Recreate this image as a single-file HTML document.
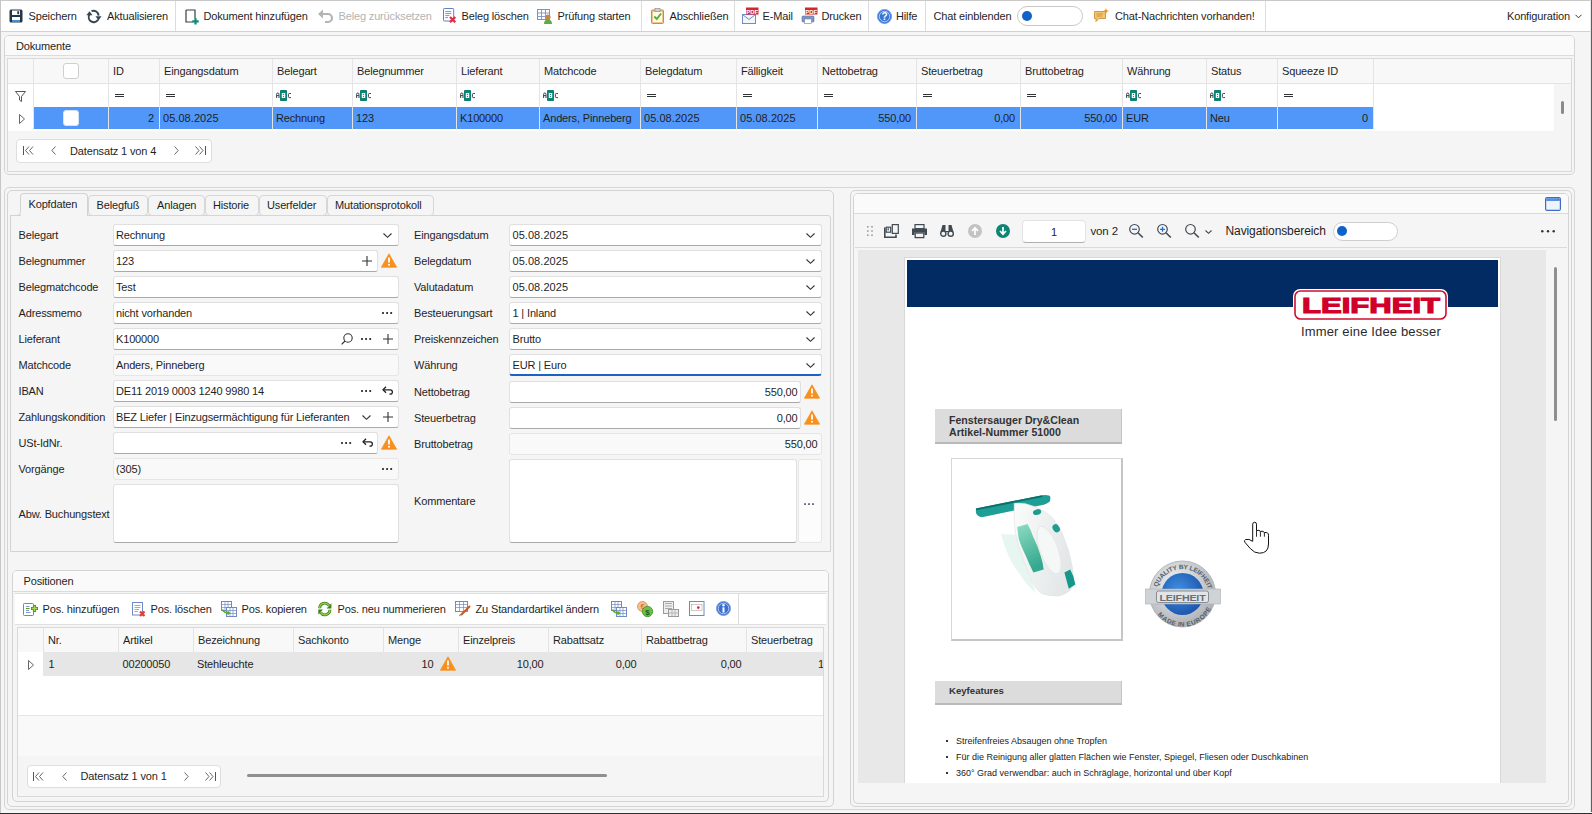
<!DOCTYPE html><html><head><meta charset="utf-8"><style>*{box-sizing:border-box;margin:0;padding:0}
html,body{width:1592px;height:814px;overflow:hidden}
body{position:relative;background:#f5f5f5;font-family:"Liberation Sans",sans-serif;font-size:11px;letter-spacing:-0.15px;color:#1f1f1f}
.a{position:absolute}
.t{position:absolute;white-space:nowrap}
svg{position:absolute;overflow:visible}
.dis{color:#b3b3b3}
</style></head><body>
<div class="a" style="left:0px;top:0px;width:1592px;height:32px;background:#fff;border-top:1px solid #c9c9c9;border-left:1px solid #c9c9c9;border-right:2px solid #d0d0d0"></div>
<div class="a" style="left:0px;top:31px;width:1592px;height:1px;background:#d2d2d2"></div>
<div class="a" style="left:175px;top:1px;width:1px;height:30px;background:#dcdcdc"></div>
<div class="a" style="left:641px;top:1px;width:1px;height:30px;background:#dcdcdc"></div>
<div class="a" style="left:734px;top:1px;width:1px;height:30px;background:#dcdcdc"></div>
<div class="a" style="left:868px;top:1px;width:1px;height:30px;background:#dcdcdc"></div>
<div class="a" style="left:925px;top:1px;width:1px;height:30px;background:#dcdcdc"></div>
<div class="a" style="left:1265px;top:1px;width:1px;height:30px;background:#dcdcdc"></div>
<svg style="left:9px;top:9px;" width="14" height="14" viewBox="0 0 14 14"><rect x="0.5" y="0.5" width="13" height="13" rx="1.5" fill="#263744"/><rect x="3" y="1.5" width="8" height="4.5" fill="#fff"/><rect x="8.3" y="2.2" width="1.8" height="3" fill="#263744"/><rect x="3" y="8" width="8" height="5" fill="#fff"/><rect x="3" y="11" width="8" height="2" fill="#3b8ede"/></svg>
<div class="t " style="left:28.5px;top:9.0px;height:14px;line-height:14px;">Speichern</div>
<svg style="left:86px;top:10px;" width="16" height="12" viewBox="0 0 16 12"><path d="M3.5 4.5 A5 5 0 0 0 12 9.8" stroke="#37474f" stroke-width="2" fill="none"/><path d="M5.5 1.2 A5 5 0 0 1 12.6 5.6" stroke="#37474f" stroke-width="2" fill="none"/><path d="M0.3 5.2 L3.5 1.2 L6.6 5.2Z" fill="#37474f"/><path d="M10 6.8 L16 6.8 L13 11 Z" fill="#37474f" transform="translate(-0.5,-0.5)"/></svg>
<div class="t " style="left:107px;top:9.0px;height:14px;line-height:14px;">Aktualisieren</div>
<svg style="left:185px;top:9px;" width="14" height="16" viewBox="0 0 14 16"><path d="M1 1 H10 V9 M1 1 V13 H8" stroke="#3a3f44" stroke-width="1.2" fill="none"/><path d="M10.5 9 V15.5 M7.3 12.3 H13.7" stroke="#0e8a76" stroke-width="2.2"/></svg>
<div class="t " style="left:203.5px;top:9.0px;height:14px;line-height:14px;">Dokument hinzufügen</div>
<svg style="left:318px;top:9px;" width="16" height="14" viewBox="0 0 16 14"><path d="M2.5 5 H10 A4 4 0 0 1 10 13 H7" stroke="#b4b4b4" stroke-width="2.2" fill="none"/><path d="M0 5 L5 0.5 L5 9.5Z" fill="#b4b4b4"/></svg>
<div class="t dis" style="left:338.5px;top:9.0px;height:14px;line-height:14px;">Beleg zurücksetzen</div>
<svg style="left:443px;top:8px;" width="14" height="15" viewBox="0 0 14 15"><rect x="0.5" y="0.5" width="10.2" height="12.5" rx="0.8" fill="#fff" stroke="#5f7fc8" stroke-width="1"/><path d="M2.3 3.6H8.3M2.3 5.6H8.3M2.3 7.6H6.5M2.3 9.6H5" stroke="#6b89cf" stroke-width="0.9"/><path d="M7 9 L12.3 14.3 M12.3 9 L7 14.3" stroke="#dd3048" stroke-width="2.3"/></svg>
<div class="t " style="left:461.5px;top:9.0px;height:14px;line-height:14px;">Beleg löschen</div>
<svg style="left:537px;top:9px;" width="16" height="15" viewBox="0 0 16 15"><rect x="0.5" y="0.5" width="12" height="10" fill="#fff" stroke="#7892cf"/><path d="M0.5 4H12.5M0.5 7.5H12.5M4.5 0.5V10.5M8.5 0.5V10.5" stroke="#7892cf" stroke-width="0.9"/><circle cx="11" cy="8" r="2.6" fill="#c8844a"/><path d="M7 15 Q7 10.5 11 10.5 Q15 10.5 15 15Z" fill="#5fae3d"/></svg>
<div class="t " style="left:557.5px;top:9.0px;height:14px;line-height:14px;">Prüfung starten</div>
<svg style="left:651px;top:8px;" width="13" height="16" viewBox="0 0 13 16"><rect x="0.5" y="2" width="12" height="13.5" rx="1" fill="#f2c48a" stroke="#cf8a3a"/><rect x="2" y="4" width="9" height="10" fill="#fffbe8"/><rect x="4" y="0.5" width="5" height="3" fill="#d0d0d0" stroke="#888" stroke-width="0.6"/><path d="M3.2 8.5 L5.8 11 L10 5.5" stroke="#55b43c" stroke-width="2" fill="none"/></svg>
<div class="t " style="left:669.5px;top:9.0px;height:14px;line-height:14px;">Abschließen</div>
<svg style="left:742px;top:7px;" width="17" height="17" viewBox="0 0 17 17"><rect x="0.5" y="7.5" width="13" height="9" fill="#f3f6fb" stroke="#6e8ec4"/><path d="M0.5 7.5 L7 12.5 L13.5 7.5" stroke="#6e8ec4" fill="none"/><rect x="4" y="0.5" width="12.5" height="7" fill="#d8242c"/><text x="10.2" y="6.5" font-size="6" font-family="Liberation Sans" font-weight="bold" fill="#fff" text-anchor="middle" letter-spacing="0">PDF</text></svg>
<div class="t " style="left:762.5px;top:9.0px;height:14px;line-height:14px;">E-Mail</div>
<svg style="left:801px;top:7px;" width="17" height="17" viewBox="0 0 17 17"><rect x="1" y="9" width="12" height="6" rx="1" fill="#7f96c4" stroke="#5a6f9c" stroke-width="0.6"/><rect x="3.5" y="12" width="7" height="4.5" fill="#fff" stroke="#6a7fae" stroke-width="0.6"/><rect x="4" y="0.5" width="12.5" height="7" fill="#d8242c"/><text x="10.2" y="6.5" font-size="6" font-family="Liberation Sans" font-weight="bold" fill="#fff" text-anchor="middle" letter-spacing="0">PDF</text></svg>
<div class="t " style="left:821.5px;top:9.0px;height:14px;line-height:14px;">Drucken</div>
<svg style="left:877px;top:9px;" width="15" height="15" viewBox="0 0 15 15"><circle cx="7.5" cy="7.5" r="7" fill="#3a74d4" stroke="#6f9ee6" stroke-width="1"/><circle cx="7.5" cy="7.5" r="5.2" fill="none" stroke="#cfe0fb" stroke-width="0.8"/><text x="7.5" y="11.2" font-size="10" font-family="Liberation Sans" font-weight="bold" fill="#fff" text-anchor="middle" letter-spacing="0">?</text></svg>
<div class="t " style="left:896px;top:9.0px;height:14px;line-height:14px;">Hilfe</div>
<div class="t " style="left:933.5px;top:9.0px;height:14px;line-height:14px;">Chat einblenden</div>
<div class="a" style="left:1017px;top:6px;width:66px;height:20px;background:#fff;border:1px solid #c9c9c9;border-radius:10px"></div>
<div class="a" style="left:1022px;top:11px;width:10px;height:10px;background:#0f62c9;border-radius:50%"></div>
<svg style="left:1094px;top:8px;" width="15" height="15" viewBox="0 0 15 15"><path d="M0.5 3.5 H11.5 V10.5 H5 L2 13.5 V10.5 H0.5Z" fill="#f4c46c" stroke="#c78a2e" stroke-width="0.8"/><path d="M2.5 6H9M2.5 8H8" stroke="#b9832d" stroke-width="0.7"/><path d="M12 0 L12.8 2.2 L15 3 L12.8 3.8 L12 6 L11.2 3.8 L9 3 L11.2 2.2Z" fill="#f08a1c"/></svg>
<div class="t " style="left:1115px;top:9.0px;height:14px;line-height:14px;">Chat-Nachrichten vorhanden!</div>
<div class="t " style="left:1507px;top:9.0px;height:14px;line-height:14px;">Konfiguration</div>
<svg style="left:1575px;top:14px;" width="7" height="5" viewBox="0 0 7 5"><path d="M0.5 0.8 L3.5 3.8 L6.5 0.8" stroke="#333" stroke-width="1" fill="none"/></svg>
<div class="a" style="left:4px;top:35px;width:1571px;height:140px;border:1px solid #d4d4d4;border-radius:5px;background:#f5f5f5"></div>
<div class="a" style="left:5px;top:36px;width:1569px;height:19px;background:#fafafa;border-radius:4px 4px 0 0"></div>
<div class="a" style="left:5px;top:55px;width:1569px;height:1px;background:#dcdcdc"></div>
<div class="t " style="left:16px;top:39.0px;height:14px;line-height:14px;">Dokumente</div>
<div class="a" style="left:7px;top:58px;width:1565px;height:114px;border:1px solid #d9d9d9;background:#f5f5f5"></div>
<div class="a" style="left:8px;top:59px;width:1563px;height:24px;background:#f8f8f8"></div>
<div class="a" style="left:8px;top:83px;width:1563px;height:1px;background:#e3e3e3"></div>
<div class="a" style="left:8px;top:84px;width:1546px;height:47px;background:#fff"></div>
<div class="a" style="left:33px;top:107px;width:1340px;height:22px;background:#5097f9"></div>
<div class="a" style="left:33px;top:59px;width:1px;height:71px;background:#e4e4e4"></div>
<div class="a" style="left:108px;top:59px;width:1px;height:71px;background:#e4e4e4"></div>
<div class="a" style="left:159px;top:59px;width:1px;height:71px;background:#e4e4e4"></div>
<div class="a" style="left:272px;top:59px;width:1px;height:71px;background:#e4e4e4"></div>
<div class="a" style="left:352px;top:59px;width:1px;height:71px;background:#e4e4e4"></div>
<div class="a" style="left:456px;top:59px;width:1px;height:71px;background:#e4e4e4"></div>
<div class="a" style="left:539px;top:59px;width:1px;height:71px;background:#e4e4e4"></div>
<div class="a" style="left:640px;top:59px;width:1px;height:71px;background:#e4e4e4"></div>
<div class="a" style="left:736px;top:59px;width:1px;height:71px;background:#e4e4e4"></div>
<div class="a" style="left:817px;top:59px;width:1px;height:71px;background:#e4e4e4"></div>
<div class="a" style="left:916px;top:59px;width:1px;height:71px;background:#e4e4e4"></div>
<div class="a" style="left:1020px;top:59px;width:1px;height:71px;background:#e4e4e4"></div>
<div class="a" style="left:1122px;top:59px;width:1px;height:71px;background:#e4e4e4"></div>
<div class="a" style="left:1206px;top:59px;width:1px;height:71px;background:#e4e4e4"></div>
<div class="a" style="left:1277px;top:59px;width:1px;height:71px;background:#e4e4e4"></div>
<div class="a" style="left:1373px;top:59px;width:1px;height:71px;background:#e4e4e4"></div>
<div class="t " style="left:113px;top:63.5px;height:14px;line-height:14px;">ID</div>
<svg style="left:115px;top:94px;" width="9" height="4" viewBox="0 0 9 4"><path d="M0 0.5H9M0 2.5H9" stroke="#333" stroke-width="1" shape-rendering="crispEdges"/></svg>
<div class="t " style="right:1438px;top:111.0px;height:14px;line-height:14px;text-align:right;">2</div>
<div class="t " style="left:164px;top:63.5px;height:14px;line-height:14px;">Eingangsdatum</div>
<svg style="left:166px;top:94px;" width="9" height="4" viewBox="0 0 9 4"><path d="M0 0.5H9M0 2.5H9" stroke="#333" stroke-width="1" shape-rendering="crispEdges"/></svg>
<div class="t " style="left:163px;top:111.0px;height:14px;line-height:14px;letter-spacing:0.05px;">05.08.2025</div>
<div class="t " style="left:277px;top:63.5px;height:14px;line-height:14px;">Belegart</div>
<svg style="left:276px;top:90px;" width="16" height="11" viewBox="0 0 16 11"><rect x="4" y="0" width="7" height="11" rx="0.8" fill="#0d8273"/><rect x="5.8" y="3" width="3.4" height="5" fill="#fff"/><circle cx="7.5" cy="4.4" r="0.7" fill="#0d8273"/><circle cx="7.5" cy="6.6" r="0.7" fill="#0d8273"/><path d="M0.6 8 V4.3 Q0.6 3 1.8 3 Q3 3 3 4.3 V8 M0.6 5.6H3" stroke="#3a4048" stroke-width="1" fill="none"/><path d="M15 3.5 H13.3 Q12.4 3.5 12.4 4.4 V6.6 Q12.4 7.6 13.3 7.6 H15" stroke="#3a4048" stroke-width="1" fill="none"/></svg>
<div class="t " style="left:276px;top:111.0px;height:14px;line-height:14px;">Rechnung</div>
<div class="t " style="left:357px;top:63.5px;height:14px;line-height:14px;">Belegnummer</div>
<svg style="left:356px;top:90px;" width="16" height="11" viewBox="0 0 16 11"><rect x="4" y="0" width="7" height="11" rx="0.8" fill="#0d8273"/><rect x="5.8" y="3" width="3.4" height="5" fill="#fff"/><circle cx="7.5" cy="4.4" r="0.7" fill="#0d8273"/><circle cx="7.5" cy="6.6" r="0.7" fill="#0d8273"/><path d="M0.6 8 V4.3 Q0.6 3 1.8 3 Q3 3 3 4.3 V8 M0.6 5.6H3" stroke="#3a4048" stroke-width="1" fill="none"/><path d="M15 3.5 H13.3 Q12.4 3.5 12.4 4.4 V6.6 Q12.4 7.6 13.3 7.6 H15" stroke="#3a4048" stroke-width="1" fill="none"/></svg>
<div class="t " style="left:356px;top:111.0px;height:14px;line-height:14px;">123</div>
<div class="t " style="left:461px;top:63.5px;height:14px;line-height:14px;">Lieferant</div>
<svg style="left:460px;top:90px;" width="16" height="11" viewBox="0 0 16 11"><rect x="4" y="0" width="7" height="11" rx="0.8" fill="#0d8273"/><rect x="5.8" y="3" width="3.4" height="5" fill="#fff"/><circle cx="7.5" cy="4.4" r="0.7" fill="#0d8273"/><circle cx="7.5" cy="6.6" r="0.7" fill="#0d8273"/><path d="M0.6 8 V4.3 Q0.6 3 1.8 3 Q3 3 3 4.3 V8 M0.6 5.6H3" stroke="#3a4048" stroke-width="1" fill="none"/><path d="M15 3.5 H13.3 Q12.4 3.5 12.4 4.4 V6.6 Q12.4 7.6 13.3 7.6 H15" stroke="#3a4048" stroke-width="1" fill="none"/></svg>
<div class="t " style="left:460px;top:111.0px;height:14px;line-height:14px;">K100000</div>
<div class="t " style="left:544px;top:63.5px;height:14px;line-height:14px;">Matchcode</div>
<svg style="left:543px;top:90px;" width="16" height="11" viewBox="0 0 16 11"><rect x="4" y="0" width="7" height="11" rx="0.8" fill="#0d8273"/><rect x="5.8" y="3" width="3.4" height="5" fill="#fff"/><circle cx="7.5" cy="4.4" r="0.7" fill="#0d8273"/><circle cx="7.5" cy="6.6" r="0.7" fill="#0d8273"/><path d="M0.6 8 V4.3 Q0.6 3 1.8 3 Q3 3 3 4.3 V8 M0.6 5.6H3" stroke="#3a4048" stroke-width="1" fill="none"/><path d="M15 3.5 H13.3 Q12.4 3.5 12.4 4.4 V6.6 Q12.4 7.6 13.3 7.6 H15" stroke="#3a4048" stroke-width="1" fill="none"/></svg>
<div class="t " style="left:543px;top:111.0px;height:14px;line-height:14px;">Anders, Pinneberg</div>
<div class="t " style="left:645px;top:63.5px;height:14px;line-height:14px;">Belegdatum</div>
<svg style="left:647px;top:94px;" width="9" height="4" viewBox="0 0 9 4"><path d="M0 0.5H9M0 2.5H9" stroke="#333" stroke-width="1" shape-rendering="crispEdges"/></svg>
<div class="t " style="left:644px;top:111.0px;height:14px;line-height:14px;letter-spacing:0.05px;">05.08.2025</div>
<div class="t " style="left:741px;top:63.5px;height:14px;line-height:14px;">Fälligkeit</div>
<svg style="left:743px;top:94px;" width="9" height="4" viewBox="0 0 9 4"><path d="M0 0.5H9M0 2.5H9" stroke="#333" stroke-width="1" shape-rendering="crispEdges"/></svg>
<div class="t " style="left:740px;top:111.0px;height:14px;line-height:14px;letter-spacing:0.05px;">05.08.2025</div>
<div class="t " style="left:822px;top:63.5px;height:14px;line-height:14px;">Nettobetrag</div>
<svg style="left:824px;top:94px;" width="9" height="4" viewBox="0 0 9 4"><path d="M0 0.5H9M0 2.5H9" stroke="#333" stroke-width="1" shape-rendering="crispEdges"/></svg>
<div class="t " style="right:681px;top:111.0px;height:14px;line-height:14px;text-align:right;">550,00</div>
<div class="t " style="left:921px;top:63.5px;height:14px;line-height:14px;">Steuerbetrag</div>
<svg style="left:923px;top:94px;" width="9" height="4" viewBox="0 0 9 4"><path d="M0 0.5H9M0 2.5H9" stroke="#333" stroke-width="1" shape-rendering="crispEdges"/></svg>
<div class="t " style="right:577px;top:111.0px;height:14px;line-height:14px;text-align:right;">0,00</div>
<div class="t " style="left:1025px;top:63.5px;height:14px;line-height:14px;">Bruttobetrag</div>
<svg style="left:1027px;top:94px;" width="9" height="4" viewBox="0 0 9 4"><path d="M0 0.5H9M0 2.5H9" stroke="#333" stroke-width="1" shape-rendering="crispEdges"/></svg>
<div class="t " style="right:475px;top:111.0px;height:14px;line-height:14px;text-align:right;">550,00</div>
<div class="t " style="left:1127px;top:63.5px;height:14px;line-height:14px;">Währung</div>
<svg style="left:1126px;top:90px;" width="16" height="11" viewBox="0 0 16 11"><rect x="4" y="0" width="7" height="11" rx="0.8" fill="#0d8273"/><rect x="5.8" y="3" width="3.4" height="5" fill="#fff"/><circle cx="7.5" cy="4.4" r="0.7" fill="#0d8273"/><circle cx="7.5" cy="6.6" r="0.7" fill="#0d8273"/><path d="M0.6 8 V4.3 Q0.6 3 1.8 3 Q3 3 3 4.3 V8 M0.6 5.6H3" stroke="#3a4048" stroke-width="1" fill="none"/><path d="M15 3.5 H13.3 Q12.4 3.5 12.4 4.4 V6.6 Q12.4 7.6 13.3 7.6 H15" stroke="#3a4048" stroke-width="1" fill="none"/></svg>
<div class="t " style="left:1126px;top:111.0px;height:14px;line-height:14px;">EUR</div>
<div class="t " style="left:1211px;top:63.5px;height:14px;line-height:14px;">Status</div>
<svg style="left:1210px;top:90px;" width="16" height="11" viewBox="0 0 16 11"><rect x="4" y="0" width="7" height="11" rx="0.8" fill="#0d8273"/><rect x="5.8" y="3" width="3.4" height="5" fill="#fff"/><circle cx="7.5" cy="4.4" r="0.7" fill="#0d8273"/><circle cx="7.5" cy="6.6" r="0.7" fill="#0d8273"/><path d="M0.6 8 V4.3 Q0.6 3 1.8 3 Q3 3 3 4.3 V8 M0.6 5.6H3" stroke="#3a4048" stroke-width="1" fill="none"/><path d="M15 3.5 H13.3 Q12.4 3.5 12.4 4.4 V6.6 Q12.4 7.6 13.3 7.6 H15" stroke="#3a4048" stroke-width="1" fill="none"/></svg>
<div class="t " style="left:1210px;top:111.0px;height:14px;line-height:14px;">Neu</div>
<div class="t " style="left:1282px;top:63.5px;height:14px;line-height:14px;">Squeeze ID</div>
<svg style="left:1284px;top:94px;" width="9" height="4" viewBox="0 0 9 4"><path d="M0 0.5H9M0 2.5H9" stroke="#333" stroke-width="1" shape-rendering="crispEdges"/></svg>
<div class="t " style="right:224px;top:111.0px;height:14px;line-height:14px;text-align:right;">0</div>
<div class="a" style="left:63px;top:63px;width:16px;height:16px;background:#fff;border:1px solid #cfcfcf;border-radius:3px"></div>
<div class="a" style="left:63px;top:110px;width:16px;height:16px;background:#fff;border:1px solid #d6e4f7;border-radius:3px"></div>
<svg style="left:15px;top:91px;" width="11" height="10" viewBox="0 0 11 10"><path d="M0.5 0.5 H10.5 L6.5 5.5 V10.5 L4.5 9 V5.5Z" fill="none" stroke="#444" stroke-width="0.9"/></svg>
<svg style="left:18.5px;top:113.5px;" width="6" height="10" viewBox="0 0 6 10"><path d="M0.5 0.5 L5.5 5 L0.5 9.5Z" fill="none" stroke="#555" stroke-width="0.9"/></svg>
<div class="a" style="left:1561px;top:101px;width:3px;height:13px;background:#8a8a8a;border-radius:2px"></div>
<div class="a" style="left:16px;top:139px;width:196px;height:24px;background:#fff;border:1px solid #dedede;border-radius:4px"></div>
<svg style="left:23px;top:146px;" width="11" height="9" viewBox="0 0 11 9"><path d="M0.5 0 V9" stroke="#555"/><path d="M6 0.5 L2.5 4.5 L6 8.5 M10 0.5 L6.5 4.5 L10 8.5" stroke="#555" fill="none" stroke-width="0.9"/></svg>
<svg style="left:51px;top:146px;" width="5" height="9" viewBox="0 0 5 9"><path d="M4.5 0.5 L0.8 4.5 L4.5 8.5" stroke="#555" fill="none" stroke-width="0.9"/></svg>
<div class="t " style="left:70px;top:144.0px;height:14px;line-height:14px;">Datensatz 1 von 4</div>
<svg style="left:174px;top:146px;" width="5" height="9" viewBox="0 0 5 9"><path d="M0.5 0.5 L4.2 4.5 L0.5 8.5" stroke="#555" fill="none" stroke-width="0.9"/></svg>
<svg style="left:195px;top:146px;" width="11" height="9" viewBox="0 0 11 9"><path d="M10.5 0 V9" stroke="#555"/><path d="M0.5 0.5 L4 4.5 L0.5 8.5 M4.5 0.5 L8 4.5 L4.5 8.5" stroke="#555" fill="none" stroke-width="0.9"/></svg>
<div class="a" style="left:4px;top:187px;width:1571px;height:623px;border:1px solid #d6d6d6;border-radius:5px"></div>
<div class="a" style="left:7px;top:190px;width:827px;height:617px;border:1px solid #d3d3d3;border-radius:5px"></div>
<div class="a" style="left:10px;top:215px;width:821px;height:337px;border:1px solid #d3d3d3;border-radius:0 3px 0 0"></div>
<div class="a" style="left:20px;top:193px;width:67.5px;height:23px;border:1px solid #d3d3d3;border-bottom:none;border-radius:4px 4px 0 0;background:#f5f5f5"></div>
<div class="t " style="left:28.5px;top:197.0px;height:14px;line-height:14px;">Kopfdaten</div>
<div class="a" style="left:11px;top:210px;width:10.5px;height:5px;background:#f5f5f5"></div>
<svg style="left:10px;top:205px;" width="12" height="12" viewBox="0 0 12 12"><path d="M10.5 0 V7 Q10.5 10.5 7 10.5 H0" stroke="#d3d3d3" stroke-width="1" fill="none"/></svg>
<div class="a" style="left:87.5px;top:195px;width:60.5px;height:20.5px;border:1px solid #d6d6d6;border-radius:4px;background:#f5f5f5"></div>
<div class="t " style="left:96.5px;top:197.5px;height:14px;line-height:14px;">Belegfuß</div>
<div class="a" style="left:148px;top:195px;width:56.5px;height:20.5px;border:1px solid #d6d6d6;border-radius:4px;background:#f5f5f5"></div>
<div class="t " style="left:157px;top:197.5px;height:14px;line-height:14px;">Anlagen</div>
<div class="a" style="left:204.5px;top:195px;width:54.0px;height:20.5px;border:1px solid #d6d6d6;border-radius:4px;background:#f5f5f5"></div>
<div class="t " style="left:213px;top:197.5px;height:14px;line-height:14px;">Historie</div>
<div class="a" style="left:258.5px;top:195px;width:68.0px;height:20.5px;border:1px solid #d6d6d6;border-radius:4px;background:#f5f5f5"></div>
<div class="t " style="left:267px;top:197.5px;height:14px;line-height:14px;">Userfelder</div>
<div class="a" style="left:326.5px;top:195px;width:107.5px;height:20.5px;border:1px solid #d6d6d6;border-radius:4px;background:#f5f5f5"></div>
<div class="t " style="left:335px;top:197.5px;height:14px;line-height:14px;">Mutationsprotokoll</div>
<div class="t " style="left:18.5px;top:228.0px;height:14px;line-height:14px;">Belegart</div>
<div class="a" style="left:113px;top:224px;width:285.5px;height:22px;background:#fff;border:1px solid #e0e0e0;border-bottom:1px solid #a9a9a9;border-radius:3px"></div>
<div class="t " style="left:116px;top:228.0px;height:14px;line-height:14px;">Rechnung</div>
<svg style="left:382.5px;top:232.5px;" width="9" height="5" viewBox="0 0 9 5"><path d="M0.5 0.5 L4.5 4.3 L8.5 0.5" stroke="#333" stroke-width="1.1" fill="none"/></svg>
<div class="t " style="left:18.5px;top:254.0px;height:14px;line-height:14px;">Belegnummer</div>
<div class="a" style="left:113px;top:250px;width:265px;height:22px;background:#fff;border:1px solid #e0e0e0;border-bottom:1px solid #a9a9a9;border-radius:3px"></div>
<div class="t " style="left:116px;top:254.0px;height:14px;line-height:14px;">123</div>
<svg style="left:381px;top:253px;" width="16" height="15" viewBox="0 0 16 15"><path d="M8 0.8 L15.6 14.2 H0.4Z" fill="#f7901e" stroke="#f7901e" stroke-width="0.8" stroke-linejoin="round"/><path d="M8 4.5 V9.5" stroke="#fff" stroke-width="1.8"/><circle cx="8" cy="11.8" r="1" fill="#fff"/></svg>
<svg style="left:362px;top:256px;" width="10" height="10" viewBox="0 0 10 10"><path d="M5 0 V10 M0 5 H10" stroke="#333" stroke-width="1.1"/></svg>
<div class="t " style="left:18.5px;top:280.0px;height:14px;line-height:14px;">Belegmatchcode</div>
<div class="a" style="left:113px;top:276px;width:285.5px;height:22px;background:#fff;border:1px solid #e0e0e0;border-bottom:1px solid #a9a9a9;border-radius:3px"></div>
<div class="t " style="left:116px;top:280.0px;height:14px;line-height:14px;">Test</div>
<div class="t " style="left:18.5px;top:306.0px;height:14px;line-height:14px;">Adressmemo</div>
<div class="a" style="left:113px;top:302px;width:285.5px;height:22px;background:#fff;border:1px solid #e0e0e0;border-bottom:1px solid #a9a9a9;border-radius:3px"></div>
<div class="t " style="left:116px;top:306.0px;height:14px;line-height:14px;">nicht vorhanden</div>
<svg style="left:382.0px;top:312px;" width="11" height="2" viewBox="0 0 11 2"><rect x="0.1" y="0.1" width="1.8" height="1.8" fill="#222"/><rect x="4.2" y="0.1" width="1.8" height="1.8" fill="#222"/><rect x="8.3" y="0.1" width="1.8" height="1.8" fill="#222"/></svg>
<div class="t " style="left:18.5px;top:332.0px;height:14px;line-height:14px;">Lieferant</div>
<div class="a" style="left:113px;top:328px;width:285.5px;height:22px;background:#fff;border:1px solid #e0e0e0;border-bottom:1px solid #a9a9a9;border-radius:3px"></div>
<div class="t " style="left:116px;top:332.0px;height:14px;line-height:14px;">K100000</div>
<svg style="left:382.5px;top:334px;" width="10" height="10" viewBox="0 0 10 10"><path d="M5 0 V10 M0 5 H10" stroke="#333" stroke-width="1.1"/></svg>
<svg style="left:361.0px;top:338px;" width="11" height="2" viewBox="0 0 11 2"><rect x="0.1" y="0.1" width="1.8" height="1.8" fill="#222"/><rect x="4.2" y="0.1" width="1.8" height="1.8" fill="#222"/><rect x="8.3" y="0.1" width="1.8" height="1.8" fill="#222"/></svg>
<svg style="left:340.5px;top:333px;" width="12" height="12" viewBox="0 0 12 12"><circle cx="7" cy="5" r="4.2" stroke="#333" stroke-width="1.1" fill="none"/><path d="M4 8 L0.6 11.4" stroke="#333" stroke-width="1.2"/></svg>
<div class="t " style="left:18.5px;top:358.0px;height:14px;line-height:14px;">Matchcode</div>
<div class="a" style="left:113px;top:354px;width:285.5px;height:22px;background:#f9f9f9;border:1px solid #e6e6e6;border-radius:3px"></div>
<div class="t " style="left:116px;top:358.0px;height:14px;line-height:14px;">Anders, Pinneberg</div>
<div class="t " style="left:18.5px;top:384.0px;height:14px;line-height:14px;">IBAN</div>
<div class="a" style="left:113px;top:380px;width:285.5px;height:22px;background:#fff;border:1px solid #e0e0e0;border-bottom:1px solid #a9a9a9;border-radius:3px"></div>
<div class="t " style="left:116px;top:384.0px;height:14px;line-height:14px;">DE11 2019 0003 1240 9980 14</div>
<svg style="left:382.0px;top:385.5px;" width="11" height="10" viewBox="0 0 11 10"><path d="M1 3.8 H8.2 A2.2 2.2 0 0 1 8.2 8.2 H7.4" stroke="#222" stroke-width="1.25" fill="none"/><path d="M4 0.8 L1 3.8 L4 6.8" stroke="#222" stroke-width="1.25" fill="none"/></svg>
<svg style="left:361.0px;top:390px;" width="11" height="2" viewBox="0 0 11 2"><rect x="0.1" y="0.1" width="1.8" height="1.8" fill="#222"/><rect x="4.2" y="0.1" width="1.8" height="1.8" fill="#222"/><rect x="8.3" y="0.1" width="1.8" height="1.8" fill="#222"/></svg>
<div class="t " style="left:18.5px;top:410.0px;height:14px;line-height:14px;">Zahlungskondition</div>
<div class="a" style="left:113px;top:406px;width:285.5px;height:22px;background:#fff;border:1px solid #e0e0e0;border-bottom:1px solid #a9a9a9;border-radius:3px"></div>
<div class="t " style="left:116px;top:410.0px;height:14px;line-height:14px;">BEZ Liefer | Einzugsermächtigung für Lieferanten</div>
<svg style="left:382.5px;top:412px;" width="10" height="10" viewBox="0 0 10 10"><path d="M5 0 V10 M0 5 H10" stroke="#333" stroke-width="1.1"/></svg>
<svg style="left:361.5px;top:414.5px;" width="9" height="5" viewBox="0 0 9 5"><path d="M0.5 0.5 L4.5 4.3 L8.5 0.5" stroke="#333" stroke-width="1.1" fill="none"/></svg>
<div class="t " style="left:18.5px;top:436.0px;height:14px;line-height:14px;">USt-IdNr.</div>
<div class="a" style="left:113px;top:432px;width:265px;height:22px;background:#fff;border:1px solid #e0e0e0;border-bottom:1px solid #a9a9a9;border-radius:3px"></div>
<svg style="left:381px;top:435px;" width="16" height="15" viewBox="0 0 16 15"><path d="M8 0.8 L15.6 14.2 H0.4Z" fill="#f7901e" stroke="#f7901e" stroke-width="0.8" stroke-linejoin="round"/><path d="M8 4.5 V9.5" stroke="#fff" stroke-width="1.8"/><circle cx="8" cy="11.8" r="1" fill="#fff"/></svg>
<svg style="left:361.5px;top:437.5px;" width="11" height="10" viewBox="0 0 11 10"><path d="M1 3.8 H8.2 A2.2 2.2 0 0 1 8.2 8.2 H7.4" stroke="#222" stroke-width="1.25" fill="none"/><path d="M4 0.8 L1 3.8 L4 6.8" stroke="#222" stroke-width="1.25" fill="none"/></svg>
<svg style="left:340.5px;top:442px;" width="11" height="2" viewBox="0 0 11 2"><rect x="0.1" y="0.1" width="1.8" height="1.8" fill="#222"/><rect x="4.2" y="0.1" width="1.8" height="1.8" fill="#222"/><rect x="8.3" y="0.1" width="1.8" height="1.8" fill="#222"/></svg>
<div class="t " style="left:18.5px;top:462.0px;height:14px;line-height:14px;">Vorgänge</div>
<div class="a" style="left:113px;top:458px;width:285.5px;height:22px;background:#f9f9f9;border:1px solid #e6e6e6;border-radius:3px"></div>
<div class="t " style="left:116px;top:462.0px;height:14px;line-height:14px;">(305)</div>
<svg style="left:382.0px;top:468px;" width="11" height="2" viewBox="0 0 11 2"><rect x="0.1" y="0.1" width="1.8" height="1.8" fill="#222"/><rect x="4.2" y="0.1" width="1.8" height="1.8" fill="#222"/><rect x="8.3" y="0.1" width="1.8" height="1.8" fill="#222"/></svg>
<div class="t " style="left:18.5px;top:507.0px;height:14px;line-height:14px;">Abw. Buchungstext</div>
<div class="a" style="left:113px;top:484px;width:285.5px;height:59px;background:#fff;border:1px solid #e0e0e0;border-bottom:1px solid #a9a9a9;border-radius:3px"></div>
<div class="t " style="left:414px;top:228.0px;height:14px;line-height:14px;">Eingangsdatum</div>
<div class="a" style="left:509px;top:224px;width:312.5px;height:22px;background:#fff;border:1px solid #e0e0e0;border-bottom:1px solid #a9a9a9;border-radius:3px"></div>
<div class="t " style="left:512.5px;top:228.0px;height:14px;line-height:14px;letter-spacing:0.05px;">05.08.2025</div>
<svg style="left:805.5px;top:232.5px;" width="9" height="5" viewBox="0 0 9 5"><path d="M0.5 0.5 L4.5 4.3 L8.5 0.5" stroke="#333" stroke-width="1.1" fill="none"/></svg>
<div class="t " style="left:414px;top:254.0px;height:14px;line-height:14px;">Belegdatum</div>
<div class="a" style="left:509px;top:250px;width:312.5px;height:22px;background:#fff;border:1px solid #e0e0e0;border-bottom:1px solid #a9a9a9;border-radius:3px"></div>
<div class="t " style="left:512.5px;top:254.0px;height:14px;line-height:14px;letter-spacing:0.05px;">05.08.2025</div>
<svg style="left:805.5px;top:258.5px;" width="9" height="5" viewBox="0 0 9 5"><path d="M0.5 0.5 L4.5 4.3 L8.5 0.5" stroke="#333" stroke-width="1.1" fill="none"/></svg>
<div class="t " style="left:414px;top:280.0px;height:14px;line-height:14px;">Valutadatum</div>
<div class="a" style="left:509px;top:276px;width:312.5px;height:22px;background:#fff;border:1px solid #e0e0e0;border-bottom:1px solid #a9a9a9;border-radius:3px"></div>
<div class="t " style="left:512.5px;top:280.0px;height:14px;line-height:14px;letter-spacing:0.05px;">05.08.2025</div>
<svg style="left:805.5px;top:284.5px;" width="9" height="5" viewBox="0 0 9 5"><path d="M0.5 0.5 L4.5 4.3 L8.5 0.5" stroke="#333" stroke-width="1.1" fill="none"/></svg>
<div class="t " style="left:414px;top:306.0px;height:14px;line-height:14px;">Besteuerungsart</div>
<div class="a" style="left:509px;top:302px;width:312.5px;height:22px;background:#fff;border:1px solid #e0e0e0;border-bottom:1px solid #a9a9a9;border-radius:3px"></div>
<div class="t " style="left:512.5px;top:306.0px;height:14px;line-height:14px;">1 | Inland</div>
<svg style="left:805.5px;top:310.5px;" width="9" height="5" viewBox="0 0 9 5"><path d="M0.5 0.5 L4.5 4.3 L8.5 0.5" stroke="#333" stroke-width="1.1" fill="none"/></svg>
<div class="t " style="left:414px;top:332.0px;height:14px;line-height:14px;">Preiskennzeichen</div>
<div class="a" style="left:509px;top:328px;width:312.5px;height:22px;background:#fff;border:1px solid #e0e0e0;border-bottom:1px solid #a9a9a9;border-radius:3px"></div>
<div class="t " style="left:512.5px;top:332.0px;height:14px;line-height:14px;">Brutto</div>
<svg style="left:805.5px;top:336.5px;" width="9" height="5" viewBox="0 0 9 5"><path d="M0.5 0.5 L4.5 4.3 L8.5 0.5" stroke="#333" stroke-width="1.1" fill="none"/></svg>
<div class="t " style="left:414px;top:358.0px;height:14px;line-height:14px;">Währung</div>
<div class="a" style="left:509px;top:354px;width:312.5px;height:22px;background:#fff;border:1px solid #e0e0e0;border-bottom:2px solid #1a62c4;border-radius:3px"></div>
<div class="t " style="left:512.5px;top:358.0px;height:14px;line-height:14px;">EUR | Euro</div>
<svg style="left:805.5px;top:362.5px;" width="9" height="5" viewBox="0 0 9 5"><path d="M0.5 0.5 L4.5 4.3 L8.5 0.5" stroke="#333" stroke-width="1.1" fill="none"/></svg>
<div class="t " style="left:414px;top:385.0px;height:14px;line-height:14px;">Nettobetrag</div>
<div class="a" style="left:509px;top:381px;width:292px;height:22px;background:#fff;border:1px solid #e0e0e0;border-bottom:1px solid #a9a9a9;border-radius:3px"></div>
<div class="t " style="right:794.5px;top:385.0px;height:14px;line-height:14px;text-align:right;">550,00</div>
<svg style="left:804px;top:384px;" width="16" height="15" viewBox="0 0 16 15"><path d="M8 0.8 L15.6 14.2 H0.4Z" fill="#f7901e" stroke="#f7901e" stroke-width="0.8" stroke-linejoin="round"/><path d="M8 4.5 V9.5" stroke="#fff" stroke-width="1.8"/><circle cx="8" cy="11.8" r="1" fill="#fff"/></svg>
<div class="t " style="left:414px;top:411.0px;height:14px;line-height:14px;">Steuerbetrag</div>
<div class="a" style="left:509px;top:407px;width:292px;height:22px;background:#fff;border:1px solid #e0e0e0;border-bottom:1px solid #a9a9a9;border-radius:3px"></div>
<div class="t " style="right:794.5px;top:411.0px;height:14px;line-height:14px;text-align:right;">0,00</div>
<svg style="left:804px;top:410px;" width="16" height="15" viewBox="0 0 16 15"><path d="M8 0.8 L15.6 14.2 H0.4Z" fill="#f7901e" stroke="#f7901e" stroke-width="0.8" stroke-linejoin="round"/><path d="M8 4.5 V9.5" stroke="#fff" stroke-width="1.8"/><circle cx="8" cy="11.8" r="1" fill="#fff"/></svg>
<div class="t " style="left:414px;top:437.0px;height:14px;line-height:14px;">Bruttobetrag</div>
<div class="a" style="left:509px;top:433px;width:312.5px;height:22px;background:#f9f9f9;border:1px solid #e6e6e6;border-radius:3px"></div>
<div class="t " style="right:774.5px;top:437.0px;height:14px;line-height:14px;text-align:right;">550,00</div>
<div class="t " style="left:414px;top:494.0px;height:14px;line-height:14px;">Kommentare</div>
<div class="a" style="left:509px;top:459px;width:287.5px;height:83.5px;background:#fff;border:1px solid #e0e0e0;border-bottom:1px solid #a9a9a9;border-radius:3px"></div>
<div class="a" style="left:797.5px;top:459px;width:24.0px;height:83.5px;background:#fcfcfc;border:1px solid #e6e6e6;border-radius:3px"></div>
<svg style="left:803.5px;top:502.5px;" width="11" height="2" viewBox="0 0 11 2"><rect x="0.3" y="0.3" width="1.4" height="1.6" fill="#1a1a40"/><rect x="4.3" y="0.3" width="1.4" height="1.6" fill="#1a1a40"/><rect x="8.3" y="0.3" width="1.4" height="1.6" fill="#1a1a40"/></svg>
<div class="a" style="left:12px;top:570px;width:816.5px;height:231.5px;border:1px solid #d3d3d3;border-radius:5px;background:#f5f5f5"></div>
<div class="a" style="left:13px;top:571px;width:814.5px;height:19.5px;background:#fafafa;border-radius:4px 4px 0 0"></div>
<div class="a" style="left:13px;top:590.5px;width:814.5px;height:1.0px;background:#dadada"></div>
<div class="t " style="left:23.5px;top:574.0px;height:14px;line-height:14px;">Positionen</div>
<div class="a" style="left:14.5px;top:593px;width:811.5px;height:31.5px;background:#fff;border-top:1px solid #dedede;border-bottom:1px solid #e0e0e0"></div>
<div class="a" style="left:738px;top:594px;width:1px;height:30px;background:#dcdcdc"></div>
<svg style="left:23px;top:603px;" width="16" height="13" viewBox="0 0 16 13"><rect x="0.5" y="0.5" width="10" height="12" rx="0.8" fill="#fff" stroke="#6b84c4"/><path d="M3 3.5H6.5M3 7.5H6M3 9.5H7.5" stroke="#6f8fd0" stroke-width="0.9"/><path d="M3 5.5H6.5" stroke="#5e9a1e" stroke-width="1"/><path d="M11.5 2 V9 M8 5.5 H15" stroke="#4f8a16" stroke-width="3.2"/><path d="M11.5 2.7 V8.3 M8.7 5.5 H14.3" stroke="#9fd84a" stroke-width="1.5"/></svg>
<div class="t " style="left:42.5px;top:601.8px;height:14px;line-height:14px;">Pos. hinzufügen</div>
<svg style="left:132px;top:602px;" width="14" height="15" viewBox="0 0 14 15"><rect x="0.5" y="0.5" width="10" height="12.5" fill="#fff" stroke="#6f89c4"/><path d="M2.5 3.5H8.5M2.5 5.5H8.5M2.5 7.5H7M2.5 9.5H6" stroke="#7c93cf" stroke-width="0.8"/><path d="M8 9.5 L12.5 14 M12.5 9.5 L8 14" stroke="#e23b3b" stroke-width="2.2"/></svg>
<div class="t " style="left:150.5px;top:601.8px;height:14px;line-height:14px;">Pos. löschen</div>
<svg style="left:221px;top:601px;" width="16" height="16" viewBox="0 0 16 16"><rect x="0.5" y="0.5" width="10" height="9" fill="#fff" stroke="#6f89c4"/><path d="M0.5 3.5H10.5M0.5 6.5H10.5M4 0.5V9.5M7 0.5V9.5" stroke="#6f89c4" stroke-width="0.7"/><rect x="5.5" y="6.5" width="10" height="9" fill="#fff" stroke="#6f89c4"/><path d="M5.5 9.5H15.5M5.5 12.5H15.5M9 6.5V15.5M12 6.5V15.5" stroke="#6f89c4" stroke-width="0.7"/><path d="M1.5 8.5 Q3 12 7.5 12" stroke="#5aad2e" stroke-width="1.8" fill="none"/><path d="M6.5 9.5 L9.5 12 L6.5 14.5Z" fill="#5aad2e"/></svg>
<div class="t " style="left:241.5px;top:601.8px;height:14px;line-height:14px;">Pos. kopieren</div>
<svg style="left:317.5px;top:601.5px;" width="14" height="14" viewBox="0 0 14 14"><path d="M1.6 6.2 A5.1 5.1 0 0 1 11 3.6" stroke="#3f7f18" stroke-width="2.8" fill="none"/><path d="M1.6 6.2 A5.1 5.1 0 0 1 11 3.6" stroke="#94d44a" stroke-width="1.2" fill="none"/><path d="M8.6 6.6 H13.4 V1.2Z" fill="#3f7f18"/><path d="M12 7.8 A5.1 5.1 0 0 1 2.6 10.4" stroke="#3f7f18" stroke-width="2.8" fill="none"/><path d="M12 7.8 A5.1 5.1 0 0 1 2.6 10.4" stroke="#94d44a" stroke-width="1.2" fill="none"/><path d="M5 7.4 H0.3 V12.8Z" fill="#3f7f18"/></svg>
<div class="t " style="left:337.5px;top:601.8px;height:14px;line-height:14px;">Pos. neu nummerieren</div>
<svg style="left:455px;top:601px;" width="16" height="16" viewBox="0 0 16 16"><rect x="0.5" y="0.5" width="12" height="10" fill="#fff" stroke="#6f89c4"/><path d="M0.5 3.5H12.5M0.5 6.5H12.5M4.5 0.5V10.5M8.5 0.5V10.5" stroke="#6f89c4" stroke-width="0.7"/><path d="M15 5 L6 14" stroke="#c85a2c" stroke-width="2.2"/><path d="M6 14 L4 15.5 L5 13Z" fill="#555"/></svg>
<div class="t " style="left:475.5px;top:601.8px;height:14px;line-height:14px;">Zu Standardartikel ändern</div>
<svg style="left:611px;top:601px;" width="16" height="16" viewBox="0 0 16 16"><rect x="0.5" y="0.5" width="10" height="9" fill="#fff" stroke="#6f89c4"/><path d="M0.5 3.5H10.5M0.5 6.5H10.5M4 0.5V9.5M7 0.5V9.5" stroke="#6f89c4" stroke-width="0.7"/><rect x="5.5" y="6.5" width="10" height="9" fill="#fff" stroke="#6f89c4"/><path d="M5.5 9.5H15.5M5.5 12.5H15.5M9 6.5V15.5M12 6.5V15.5" stroke="#6f89c4" stroke-width="0.7"/><path d="M1.5 8.5 Q3 12 7.5 12" stroke="#5aad2e" stroke-width="1.8" fill="none"/><path d="M6.5 9.5 L9.5 12 L6.5 14.5Z" fill="#5aad2e"/></svg>
<svg style="left:637px;top:601px;" width="16" height="16" viewBox="0 0 16 16"><circle cx="5.5" cy="5.5" r="5" fill="#f6c089" stroke="#d98b44" stroke-width="0.8"/><text x="5.5" y="8.3" font-size="7" font-family="Liberation Sans" fill="#c8642a" text-anchor="middle" letter-spacing="0">€</text><circle cx="10.5" cy="10.5" r="5.2" fill="#6cc04a" stroke="#3f8d2a" stroke-width="0.8"/><text x="10.5" y="13.6" font-size="8" font-family="Liberation Sans" font-weight="bold" fill="#1f5f16" text-anchor="middle" letter-spacing="0">$</text></svg>
<svg style="left:663px;top:601px;" width="16" height="16" viewBox="0 0 16 16"><rect x="0.5" y="0.5" width="10" height="12" fill="#eee" stroke="#9a9a9a"/><path d="M2 2.5H9M2 5H9M2 7.5H9" stroke="#aaa" stroke-width="1"/><rect x="5.5" y="8.5" width="10" height="7" fill="#eee" stroke="#9a9a9a"/><path d="M5.5 12H15.5M9 8.5V15.5M12 8.5V15.5" stroke="#aaa" stroke-width="0.8"/></svg>
<svg style="left:689px;top:601px;" width="16" height="15" viewBox="0 0 16 15"><rect x="0.5" y="0.5" width="14.5" height="14" fill="#fff" stroke="#6f89c4"/><rect x="2.5" y="3.5" width="10.5" height="6" fill="#fff" stroke="#aaa" stroke-width="0.6"/><circle cx="9.3" cy="6.6" r="1.3" fill="#e02020"/></svg>
<svg style="left:716px;top:601px;" width="15" height="15" viewBox="0 0 15 15"><circle cx="7.5" cy="7.5" r="7" fill="#3a6fcf" stroke="#7aa2e4" stroke-width="1"/><circle cx="7.5" cy="7.5" r="5.3" fill="none" stroke="#cfe0fb" stroke-width="0.8"/><circle cx="7.5" cy="4.2" r="1.2" fill="#fff"/><path d="M7.5 6.3V11.5" stroke="#fff" stroke-width="2"/></svg>
<div class="a" style="left:17px;top:627px;width:807px;height:170px;border:1px solid #d9d9d9;background:#f5f5f5"></div>
<div class="a" style="left:18px;top:628px;width:805px;height:24px;background:#f8f8f8"></div>
<div class="a" style="left:18px;top:652px;width:805px;height:63px;background:#fff"></div>
<div class="a" style="left:18px;top:715px;width:805px;height:1px;background:#e6e6e6"></div>
<div class="a" style="left:18px;top:716px;width:805px;height:39.5px;background:#f9f9f9"></div>
<div class="a" style="left:43px;top:652px;width:780px;height:24px;background:#e6e6e6"></div>
<div class="a" style="left:43px;top:628px;width:1px;height:24px;background:#e3e3e3"></div>
<div class="t " style="left:48px;top:633.0px;height:14px;line-height:14px;">Nr.</div>
<div class="a" style="left:118px;top:628px;width:1px;height:24px;background:#e3e3e3"></div>
<div class="t " style="left:123px;top:633.0px;height:14px;line-height:14px;">Artikel</div>
<div class="a" style="left:193px;top:628px;width:1px;height:24px;background:#e3e3e3"></div>
<div class="t " style="left:198px;top:633.0px;height:14px;line-height:14px;">Bezeichnung</div>
<div class="a" style="left:293px;top:628px;width:1px;height:24px;background:#e3e3e3"></div>
<div class="t " style="left:298px;top:633.0px;height:14px;line-height:14px;">Sachkonto</div>
<div class="a" style="left:383px;top:628px;width:1px;height:24px;background:#e3e3e3"></div>
<div class="t " style="left:388px;top:633.0px;height:14px;line-height:14px;">Menge</div>
<div class="a" style="left:458px;top:628px;width:1px;height:24px;background:#e3e3e3"></div>
<div class="t " style="left:463px;top:633.0px;height:14px;line-height:14px;">Einzelpreis</div>
<div class="a" style="left:548px;top:628px;width:1px;height:24px;background:#e3e3e3"></div>
<div class="t " style="left:553px;top:633.0px;height:14px;line-height:14px;">Rabattsatz</div>
<div class="a" style="left:641px;top:628px;width:1px;height:24px;background:#e3e3e3"></div>
<div class="t " style="left:646px;top:633.0px;height:14px;line-height:14px;">Rabattbetrag</div>
<div class="a" style="left:746px;top:628px;width:1px;height:24px;background:#e3e3e3"></div>
<div class="t " style="left:751px;top:633.0px;height:14px;line-height:14px;">Steuerbetrag</div>
<div class="t " style="left:48.5px;top:657.0px;height:14px;line-height:14px;">1</div>
<div class="t " style="left:122.5px;top:657.0px;height:14px;line-height:14px;">00200050</div>
<div class="t " style="left:197px;top:657.0px;height:14px;line-height:14px;">Stehleuchte</div>
<div class="t " style="right:1158.5px;top:657.0px;height:14px;line-height:14px;text-align:right;">10</div>
<svg style="left:440px;top:656px;" width="16" height="15" viewBox="0 0 16 15"><path d="M8 0.8 L15.6 14.2 H0.4Z" fill="#f7901e" stroke="#f7901e" stroke-width="0.8" stroke-linejoin="round"/><path d="M8 4.5 V9.5" stroke="#fff" stroke-width="1.8"/><circle cx="8" cy="11.8" r="1" fill="#fff"/></svg>
<div class="t " style="right:1048.5px;top:657.0px;height:14px;line-height:14px;text-align:right;">10,00</div>
<div class="t " style="right:955.5px;top:657.0px;height:14px;line-height:14px;text-align:right;">0,00</div>
<div class="t " style="right:850.5px;top:657.0px;height:14px;line-height:14px;text-align:right;">0,00</div>
<div class="a" style="left:746px;top:628px;width:77px;height:48px;overflow:hidden"><div class="t" style="left:72px;top:29px;height:14px;line-height:14px">1</div></div>
<svg style="left:28px;top:659.5px;" width="6" height="10" viewBox="0 0 6 10"><path d="M0.5 0.5 L5.5 5 L0.5 9.5Z" fill="none" stroke="#555" stroke-width="0.9"/></svg>
<div class="a" style="left:27px;top:764.5px;width:194px;height:23.0px;background:#fff;border:1px solid #dedede;border-radius:4px"></div>
<svg style="left:33px;top:772px;" width="11" height="9" viewBox="0 0 11 9"><path d="M0.5 0 V9" stroke="#555"/><path d="M6 0.5 L2.5 4.5 L6 8.5 M10 0.5 L6.5 4.5 L10 8.5" stroke="#555" fill="none" stroke-width="0.9"/></svg>
<svg style="left:61.5px;top:772px;" width="5" height="9" viewBox="0 0 5 9"><path d="M4.5 0.5 L0.8 4.5 L4.5 8.5" stroke="#555" fill="none" stroke-width="0.9"/></svg>
<div class="t " style="left:80.5px;top:769.0px;height:14px;line-height:14px;">Datensatz 1 von 1</div>
<svg style="left:184px;top:772px;" width="5" height="9" viewBox="0 0 5 9"><path d="M0.5 0.5 L4.2 4.5 L0.5 8.5" stroke="#555" fill="none" stroke-width="0.9"/></svg>
<svg style="left:205px;top:772px;" width="11" height="9" viewBox="0 0 11 9"><path d="M10.5 0 V9" stroke="#555"/><path d="M0.5 0.5 L4 4.5 L0.5 8.5 M4.5 0.5 L8 4.5 L4.5 8.5" stroke="#555" fill="none" stroke-width="0.9"/></svg>
<div class="a" style="left:247px;top:774px;width:360px;height:3px;background:#8f8f8f;border-radius:2px"></div>
<div class="a" style="left:850px;top:190px;width:722px;height:617px;border:1px solid #d3d3d3;border-radius:5px;background:#f5f5f5"></div>
<div class="a" style="left:853px;top:193px;width:716px;height:611px;border:1px solid #d3d3d3;border-radius:5px;background:#f5f5f5"></div>
<div class="a" style="left:854px;top:194px;width:714px;height:19px;background:#fafafa;border-radius:4px 4px 0 0"></div>
<div class="a" style="left:854px;top:213px;width:714px;height:1px;background:#d9d9d9"></div>
<div class="a" style="left:855px;top:247px;width:712px;height:1px;background:#dadada"></div>
<svg style="left:1545px;top:197px;" width="16" height="14" viewBox="0 0 16 14"><rect x="0.6" y="0.6" width="14.8" height="12.8" rx="1.5" fill="#eef4fb" stroke="#3d6cc6" stroke-width="1.2"/><rect x="1.2" y="1.2" width="13.6" height="2.8" fill="#5a90de"/><circle cx="13.3" cy="2.4" r="0.7" fill="#e03a3a"/></svg>
<svg style="left:867px;top:226px;" width="6" height="10" viewBox="0 0 6 10"><rect x="0" y="0" width="1.6" height="1.6" fill="#9aa0a5"/><rect x="0" y="4.2" width="1.6" height="1.6" fill="#9aa0a5"/><rect x="0" y="8.4" width="1.6" height="1.6" fill="#9aa0a5"/><rect x="4.2" y="0" width="1.6" height="1.6" fill="#9aa0a5"/><rect x="4.2" y="4.2" width="1.6" height="1.6" fill="#9aa0a5"/><rect x="4.2" y="8.4" width="1.6" height="1.6" fill="#9aa0a5"/></svg>
<svg style="left:884px;top:224px;" width="15" height="14" viewBox="0 0 15 14"><path d="M0.8 3.5 V13.2 H12 V10.5" stroke="#414a52" stroke-width="1.6" fill="none"/><rect x="2.2" y="3.2" width="4.5" height="5" fill="none" stroke="#414a52" stroke-width="1.2"/><rect x="3.6" y="4.2" width="1.2" height="2.2" fill="#414a52"/><rect x="8.3" y="0.6" width="6" height="8.8" fill="none" stroke="#414a52" stroke-width="1.2"/></svg>
<svg style="left:912px;top:224px;" width="15" height="14" viewBox="0 0 15 14"><rect x="3" y="0.6" width="9" height="4" fill="none" stroke="#414a52" stroke-width="1.2"/><path d="M0 4.5 H15 V11 H12.5 V8.5 H2.5 V11 H0Z" fill="#414a52"/><rect x="3.2" y="9" width="8.6" height="4.6" fill="none" stroke="#414a52" stroke-width="1.3"/></svg>
<svg style="left:940px;top:225px;" width="14" height="12" viewBox="0 0 14 12"><path d="M2.5 0 H5.5 V6 H8.5 V0 H11.5 L13.5 7 H0.5Z" fill="#414a52"/><circle cx="3.3" cy="8.7" r="2.6" fill="#f5f5f5" stroke="#414a52" stroke-width="1.4"/><circle cx="10.7" cy="8.7" r="2.6" fill="#f5f5f5" stroke="#414a52" stroke-width="1.4"/></svg>
<svg style="left:968px;top:224px;" width="14" height="14" viewBox="0 0 14 14"><circle cx="7" cy="7" r="7" fill="#c3c3c3"/><path d="M7 11 V4.5 M4 7 L7 3.8 L10 7" stroke="#fff" stroke-width="1.7" fill="none"/></svg>
<svg style="left:996px;top:224px;" width="14" height="14" viewBox="0 0 14 14"><circle cx="7" cy="7" r="7" fill="#0e8474"/><path d="M7 3 V9.5 M4 7 L7 10.2 L10 7" stroke="#fff" stroke-width="1.7" fill="none"/></svg>
<div class="a" style="left:1022px;top:220px;width:64px;height:22.5px;background:#fff;border:1px solid #e4e4e4;border-bottom:1px solid #b0b0b0;border-radius:4px"></div>
<div class="t" style="left:1022px;top:224.5px;width:64px;height:14px;line-height:14px;text-align:center">1</div>
<div class="t " style="left:1090.5px;top:224.0px;height:14px;line-height:14px;font-size:11.5px">von 2</div>
<svg style="left:1128.5px;top:224px;" width="15" height="14" viewBox="0 0 15 14"><circle cx="5.5" cy="5.3" r="4.8" fill="none" stroke="#414a52" stroke-width="1.2"/><path d="M9 8.8 L13.8 13.5" stroke="#414a52" stroke-width="1.6"/><path d="M3 5.3 H8" stroke="#1d6fd6" stroke-width="1.3"/></svg>
<svg style="left:1156.5px;top:224px;" width="15" height="14" viewBox="0 0 15 14"><circle cx="5.5" cy="5.3" r="4.8" fill="none" stroke="#414a52" stroke-width="1.2"/><path d="M9 8.8 L13.8 13.5" stroke="#414a52" stroke-width="1.6"/><path d="M3 5.3 H8 M5.5 2.8 V7.8" stroke="#1d6fd6" stroke-width="1.3"/></svg>
<svg style="left:1184.5px;top:224px;" width="15" height="14" viewBox="0 0 15 14"><circle cx="5.5" cy="5.3" r="4.8" fill="none" stroke="#414a52" stroke-width="1.2"/><path d="M9 8.8 L13.8 13.5" stroke="#414a52" stroke-width="1.6"/></svg>
<svg style="left:1204.5px;top:229.5px;" width="7" height="4" viewBox="0 0 7 4"><path d="M0.5 0.5 L3.5 3.3 L6.5 0.5" stroke="#414a52" stroke-width="1.1" fill="none"/></svg>
<div class="t " style="left:1225.5px;top:223.5px;height:14px;line-height:14px;font-size:12px;letter-spacing:-0.1px">Navigationsbereich</div>
<div class="a" style="left:1332.5px;top:221.5px;width:65.0px;height:19.0px;background:#fff;border:1px solid #cfcfcf;border-radius:10px"></div>
<div class="a" style="left:1337px;top:226px;width:10px;height:10px;background:#0f62c9;border-radius:50%"></div>
<svg style="left:1541px;top:230px;" width="14" height="3" viewBox="0 0 14 3"><circle cx="1.3" cy="1.3" r="1.2" fill="#333"/><circle cx="7" cy="1.3" r="1.2" fill="#333"/><circle cx="12.7" cy="1.3" r="1.2" fill="#333"/></svg>
<div class="a" style="left:857.5px;top:250px;width:688.5px;height:532.5px;background:#e8e8e8"></div>
<div class="a" style="left:1553.5px;top:267px;width:3.0px;height:154px;background:#8f8f8f;border-radius:2px"></div>
<div class="a" style="left:904px;top:257px;width:596.5px;height:525.5px;background:#fff;border:1px solid #d8d8d8;border-bottom:none"></div>
<div class="a" style="left:907px;top:260px;width:591px;height:47px;background:#022b63"></div>
<svg style="left:1293px;top:289px;" width="155" height="32" viewBox="0 0 155 32"><rect x="0" y="0" width="155" height="32" rx="7" fill="#fff"/><rect x="2" y="2" width="151" height="28" rx="5.5" fill="none" stroke="#d0102e" stroke-width="1.6"/><text x="78" y="24" font-family="Liberation Sans" font-weight="bold" font-size="22.5" fill="#d0002a" stroke="#d0002a" stroke-width="1.2" text-anchor="middle" textLength="138" lengthAdjust="spacingAndGlyphs" letter-spacing="0">LEIFHEIT</text></svg>
<div class="t " style="left:1301px;top:324.5px;height:14px;line-height:14px;font-size:13px;letter-spacing:0.15px;color:#2a2a2a">Immer eine Idee besser</div>
<div class="a" style="left:935px;top:409px;width:187px;height:35px;background:#dcdcdc;border-bottom:2px solid #b9b9b9;border-right:1px solid #c4c4c4"></div>
<div class="t " style="left:949px;top:413.5px;height:12px;line-height:12px;font-size:10.6px;font-weight:bold;letter-spacing:0;color:#333">Fenstersauger Dry&amp;Clean</div>
<div class="t " style="left:949px;top:425.5px;height:12px;line-height:12px;font-size:10.6px;font-weight:bold;letter-spacing:0;color:#333">Artikel-Nummer 51000</div>
<div class="a" style="left:950.5px;top:457.5px;width:172.0px;height:183.5px;background:#fff;border:1px solid #d6d6d6;border-right:2px solid #c6c6c6;border-bottom:2px solid #c6c6c6"></div>
<svg style="left:970px;top:490px;" width="115" height="115" viewBox="0 0 115 115">
<defs><linearGradient id="gt" x1="0" y1="0" x2="0.3" y2="1"><stop offset="0" stop-color="#8fdcc3"/><stop offset="1" stop-color="#35a98f"/></linearGradient>
<linearGradient id="gb" x1="0" y1="0" x2="1" y2="0.3"><stop offset="0" stop-color="#fbfcfc"/><stop offset="1" stop-color="#e3e7e7"/></linearGradient></defs>
<path d="M5.9 18.4 L72.2 5.2 Q80 4.5 80.3 7 Q80.5 10.5 79.6 11.8 Q77 14 73.7 14.7 L44.2 20.6 L11.8 27.3 Q6 26 5.9 22.1Z" fill="#1d9f95"/>
<path d="M5.9 18.4 L72.2 5.2 L72.5 7 L6.2 20.2Z" fill="#0d6e68"/>
<path d="M31 44 Q38 70 49 83 Q57 96 66 103 L62 92 Q54 72 47 45Z" fill="#e4f5ee" opacity="0.9"/>
<path d="M44.2 13.3 Q54 12 63.4 16.2 Q76 21 82.6 28 Q91 38 94.4 48.7 Q99 60 101.7 73.7 Q104 84 103.2 91.4 Q102.5 98 100.2 100.3 Q95 105 88.5 106.1 Q78 106 70.8 103.2 Q65 98 61.9 91.4 Q57 80 53.1 69.3 Q48 56 45.7 44.2 Q44 35 44.2 26.5Z" fill="url(#gb)" stroke="#dfe3e3" stroke-width="0.6"/>
<ellipse cx="79" cy="60" rx="9" ry="25" transform="rotate(-20 79 60)" fill="#f6f8f8" stroke="#e6eaea" stroke-width="1.2"/>
<path d="M47.2 36.9 L57.5 33.9 Q61 40 63.4 47.2 Q68 56 70.8 66.3 Q73 73 73.7 79.6 L63.4 82.6 Q59 74 56 66.3 Q51 56 48.7 48.7Z" fill="url(#gt)"/>
<ellipse cx="67.1" cy="22.1" rx="4.2" ry="2.8" transform="rotate(-15 67.1 22.1)" fill="#1f9c90"/>
<ellipse cx="86.2" cy="38.3" rx="3.3" ry="4.3" transform="rotate(-35 86.2 38.3)" fill="#1f9c90"/>
<path d="M94.4 82.6 L100.2 79.6 Q104 86 105.4 94.4 L98.8 98.8Z" fill="#17978c"/>
</svg>
<svg style="left:1145px;top:560px;" width="77" height="70" viewBox="0 0 77 70">
<defs><radialGradient id="sg" cx="0.4" cy="0.35" r="0.7"><stop offset="0" stop-color="#f2f4f6"/><stop offset="1" stop-color="#a8adb2"/></radialGradient>
<radialGradient id="bg2" cx="0.4" cy="0.4" r="0.7"><stop offset="0" stop-color="#3e8fe0"/><stop offset="1" stop-color="#1a4fa8"/></radialGradient></defs>
<circle cx="37.5" cy="34" r="33" fill="url(#sg)" stroke="#b4b8bd" stroke-width="1"/>
<circle cx="37.5" cy="34" r="21" fill="url(#bg2)"/>
<rect x="0.5" y="29" width="75" height="15" fill="#cfd3d7" stroke="#aab0b5" stroke-width="0.6"/>
<rect x="11.5" y="31" width="52" height="11.5" rx="2" fill="#e2e5e8" stroke="#7d848a" stroke-width="0.9"/>
<text x="37.5" y="40.5" font-family="Liberation Sans" font-weight="bold" font-size="9" fill="#6a7075" text-anchor="middle" textLength="46" lengthAdjust="spacingAndGlyphs">LEIFHEIT</text>
<path id="arcT" d="M12 30 A26 26 0 0 1 63 30" fill="none"/>
<text font-family="Liberation Sans" font-weight="bold" font-size="6.5" fill="#555c62"><textPath href="#arcT" startOffset="4%">QUALITY BY LEIFHEIT</textPath></text>
<path id="arcB" d="M13 46 A27 27 0 0 0 62 46" fill="none"/>
<text font-family="Liberation Sans" font-weight="bold" font-size="6.5" fill="#555c62" dy="5"><textPath href="#arcB" startOffset="10%">MADE IN EUROPE</textPath></text>
</svg>
<svg style="left:1244px;top:522px;" width="26" height="32" viewBox="0 0 26 32"><path d="M8.7 19.3 V2.2 Q8.7 0.3 10.6 0.3 Q12.5 0.3 12.5 2.2 V8.6 Q15.5 7.6 16.4 9.4 Q19.5 8.6 20.4 10.6 Q24.5 9.8 24.5 13.2 V22 Q24.5 31.2 15.5 31.2 Q10.5 31.2 6.5 26.8 L0.9 20.3 Q-0.4 18.5 1.6 17.6 Q4.6 16.4 8.7 19.3Z" fill="#fff" stroke="#111" stroke-width="1"/><path d="M12.5 8.6 V14.7 M16.4 9.4 V14.7 M20.4 10.6 V14.7" stroke="#111" stroke-width="0.9"/></svg>
<div class="a" style="left:934.5px;top:681px;width:187.5px;height:24px;background:#dcdcdc;border-bottom:2px solid #b9b9b9;border-right:1px solid #c4c4c4"></div>
<div class="t " style="left:949px;top:685.0px;height:12px;line-height:12px;font-size:9.6px;font-weight:bold;letter-spacing:0;color:#333">Keyfeatures</div>
<div class="a" style="left:946px;top:740px;width:2px;height:2px;background:#333"></div>
<div class="t " style="left:956px;top:735.5px;height:11px;line-height:11px;font-size:9px;letter-spacing:0;color:#222">Streifenfreies Absaugen ohne Tropfen</div>
<div class="a" style="left:946px;top:756px;width:2px;height:2px;background:#333"></div>
<div class="t " style="left:956px;top:751.5px;height:11px;line-height:11px;font-size:9px;letter-spacing:0;color:#222">Für die Reinigung aller glatten Flächen wie Fenster, Spiegel, Fliesen oder Duschkabinen</div>
<div class="a" style="left:946px;top:772px;width:2px;height:2px;background:#333"></div>
<div class="t " style="left:956px;top:767.5px;height:11px;line-height:11px;font-size:9px;letter-spacing:0;color:#222">360° Grad verwendbar: auch in Schräglage, horizontal und über Kopf</div>
<div class="a" style="left:1590px;top:0px;width:1px;height:814px;background:#e6e6e6"></div>
<div class="a" style="left:1591px;top:0px;width:1px;height:814px;background:#5f5f5f"></div>
<div class="a" style="left:0px;top:812px;width:1592px;height:1px;background:#f7f7f7"></div>
<div class="a" style="left:0px;top:813px;width:1592px;height:1px;background:#2e2e2e"></div>
<div class="a" style="left:0px;top:0px;width:1px;height:813px;background:#c6c6c6"></div>
</body></html>
